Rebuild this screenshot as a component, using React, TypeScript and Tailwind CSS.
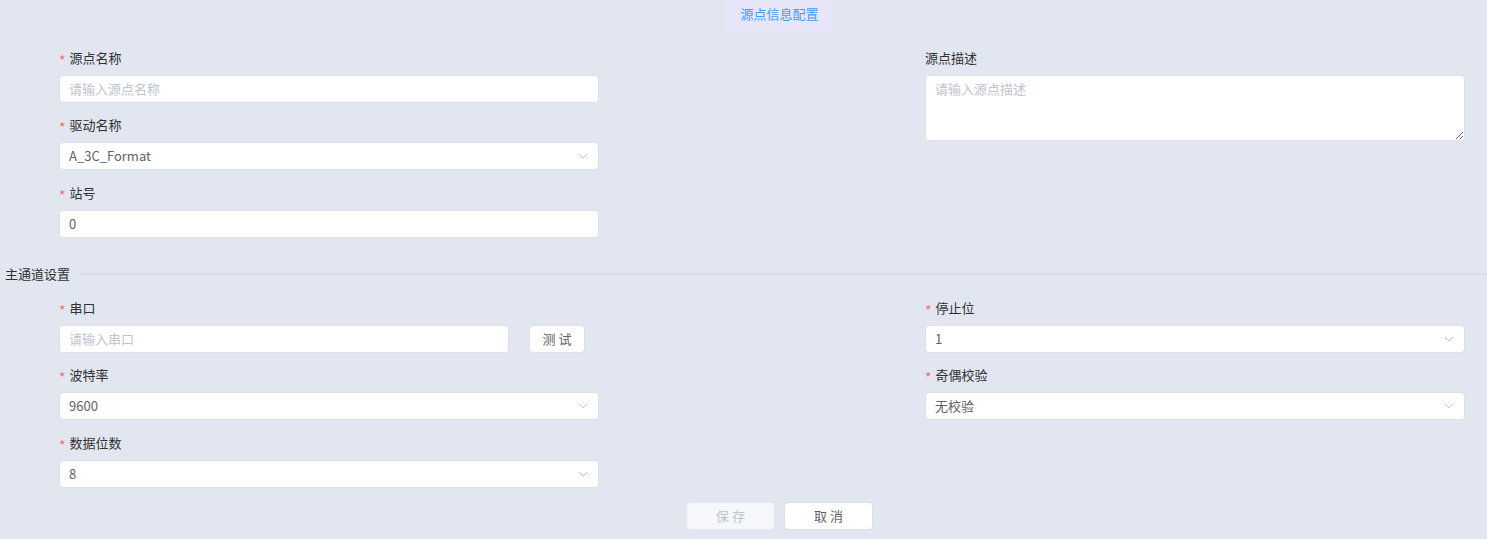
import React from "react";

const font = { fontFamily: '"Noto Sans CJK SC", "Noto Sans", sans-serif' };

function Chevron() {
  return (
    <svg width="10" height="6" viewBox="0 0 10 6" className="shrink-0">
      <path d="M1 1 L5 5 L9 1" fill="none" stroke="#c0c4cc" strokeWidth="1" />
    </svg>
  );
}

function Label({ text, required = true }: { text: string; required?: boolean }) {
  return (
    <div className="h-[17px] leading-[17px] mb-2 text-[13px] text-[#303133] flex items-center">
      {required && (
        <span className="text-[#f56c6c] mr-[4px] text-[14px] leading-[17px] translate-y-[2px]">*</span>
      )}
      <span className="-translate-y-[1px]">{text}</span>
    </div>
  );
}

function Input({ placeholder, value }: { placeholder?: string; value?: string }) {
  return (
    <div className="h-[28px] bg-white border border-[#dcdfe6] rounded-[4px] px-[9px] flex items-center text-[13px]">
      {value ? (
        <span className="text-[#606266]">{value}</span>
      ) : (
        <span className="text-[#c0c4cc]">{placeholder}</span>
      )}
    </div>
  );
}

function Select({ value }: { value: string }) {
  return (
    <div className="h-[28px] bg-white border border-[#dcdfe6] rounded-[4px] pl-[9px] pr-[10px] flex items-center justify-between text-[13px]">
      <span className="text-[#606266]">{value}</span>
      <Chevron />
    </div>
  );
}

export default function App() {
  return (
    <div className="w-[1487px] h-[539px] bg-[#e2e6f0] overflow-hidden" style={font}>
      <div className="h-[33px] flex justify-center pl-[72px]">
        <div className="h-[33px] px-[14px] bg-[#e6e6f8] flex items-center pb-[6px] text-[13px] text-[#409eff]">
          源点信息配置
        </div>
      </div>

      <div className="pt-[17px] pl-[59px] grid grid-cols-[540px_540px] gap-x-[326px]">
        <div>
          <div className="mb-[14px]">
            <Label text="源点名称" />
            <Input placeholder="请输入源点名称" />
          </div>
          <div className="mb-[15px]">
            <Label text="驱动名称" />
            <Select value="A_3C_Format" />
          </div>
          <div>
            <Label text="站号" />
            <Input value="0" />
          </div>
        </div>
        <div>
          <Label text="源点描述" required={false} />
          <textarea
            placeholder="请输入源点描述"
            className="block w-full h-[66px] bg-white border border-[#dcdfe6] rounded-[4px] px-[9px] py-[4px] text-[13px] leading-[18px] text-[#606266] placeholder:text-[#c0c4cc] outline-none"
          />
        </div>
      </div>

      <div className="mt-[27px] h-[17px] flex items-center pl-[5px]">
        <span className="text-[13px] text-[#303133] leading-[17px]">主通道设置</span>
        <div className="flex-1 h-[2px] bg-[#d8dce6] ml-[9px]" />
      </div>

      <div className="pt-[18px] pl-[59px] grid grid-cols-[540px_540px] gap-x-[326px]">
        <div>
          <div className="mb-[14px]">
            <Label text="串口" />
            <div className="flex gap-[20px]">
              <div className="w-[450px]">
                <Input placeholder="请输入串口" />
              </div>
              <div className="w-[56px] h-[28px] bg-white border border-[#dcdfe6] rounded-[4px] flex items-center justify-center text-[13px] text-[#606266]">
                测 试
              </div>
            </div>
          </div>
          <div className="mb-[15px]">
            <Label text="波特率" />
            <Select value="9600" />
          </div>
          <div>
            <Label text="数据位数" />
            <Select value="8" />
          </div>
        </div>
        <div>
          <div className="mb-[14px]">
            <Label text="停止位" />
            <Select value="1" />
          </div>
          <div>
            <Label text="奇偶校验" />
            <Select value="无校验" />
          </div>
        </div>
      </div>

      <div className="mt-[14px] flex justify-center pl-[72px] gap-[9px]">
        <div className="w-[89px] h-[28px] bg-[#f5f7fa] border border-[#e4e7ed] rounded-[4px] flex items-center justify-center text-[13px] text-[#c0c4cc]">
          保 存
        </div>
        <div className="w-[89px] h-[28px] bg-white border border-[#dcdfe6] rounded-[4px] flex items-center justify-center text-[13px] text-[#606266]">
          取 消
        </div>
      </div>
    </div>
  );
}
